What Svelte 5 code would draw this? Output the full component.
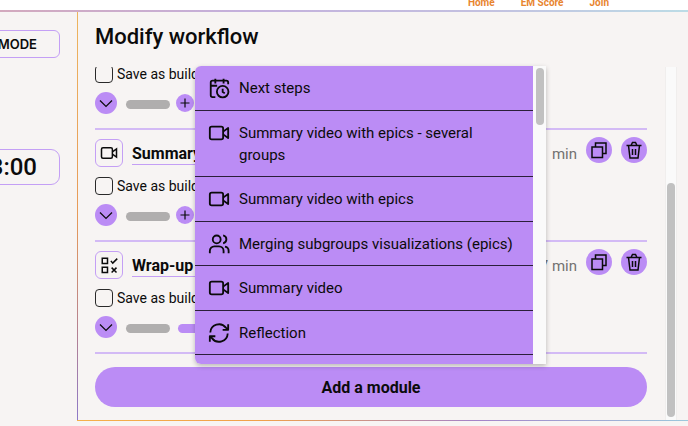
<script>
  const navLinks = ['Home', 'EM Score', 'Join'];

  const modules = [
    { id: 'intro', title: '', icon: '', minutes: 0, canInsert: true },
    { id: 'summary', title: 'Summary', icon: 'video', minutes: 1, canInsert: true },
    { id: 'wrap', title: 'Wrap-up', icon: 'checks', minutes: 7, canInsert: false },
  ];

  const moduleTypes = [
    { label: 'Next steps', icon: 'calendar' },
    { label: 'Summary video with epics - several groups', icon: 'video' },
    { label: 'Summary video with epics', icon: 'video' },
    { label: 'Merging subgroups visualizations (epics)', icon: 'users' },
    { label: 'Summary video', icon: 'video' },
    { label: 'Reflection', icon: 'refresh' },
  ];

  let selected = $state('');
</script>

{#snippet icon(name)}
  <svg class="icon" viewBox="0 0 24 24" aria-hidden="true">
    {#if name === 'video'}
      <rect x="2" y="5" width="14.5" height="14" rx="2" />
      <path d="M16.5 10.5 22 6.5v11l-5.5-4" />
    {:else if name === 'calendar'}
      <path d="M8 2v5M17 2v5M22 8V6a2 2 0 0 0-2-2H5a2 2 0 0 0-2 2v14a2 2 0 0 0 2 2h3M3 9.5h7" />
      <circle cx="16" cy="16" r="6.3" />
      <path d="M16 12.8v3.6l2.3 1.3" />
    {:else if name === 'users'}
      <circle cx="9.5" cy="7" r="4.3" />
      <path d="M2 22v-2.5a5 5 0 0 1 5-5h5a5 5 0 0 1 5 5V22" />
      <path d="M16.5 2.5a4.5 4.5 0 0 1 0 8.8M18.5 14.8a4.8 4.8 0 0 1 4 4.7V22" />
    {:else if name === 'refresh'}
      <path d="M2.5 11.5a9.5 9.5 0 0 1 17-5.3L22 8.5M22 2.5v6h-6" />
      <path d="M21.5 12.5a9.5 9.5 0 0 1-17 5.3L2 15.5M2 21.5v-6h6" />
    {:else if name === 'checks'}
      <path d="M3 3h7v7H3zM3 15h7v7H3z" />
      <path d="m14.5 6.5 2.5 3 6-6M15.5 15.5 22 22M22 15.5 15.5 22" />
    {/if}
  </svg>
{/snippet}

<header class="topbar">
  <nav>
    {#each navLinks as link}
      <a href="#{link}">{link}</a>
    {/each}
  </nav>
</header>

<div class="layout">
  <aside>
    <button class="mode" type="button">MODE</button>
    <div class="clock">3:00</div>
  </aside>

  <main class="panel">
    <h1>Modify workflow</h1>

    <div class="body">
      <div class="content">
        <div class="modules">
          {#each modules as mod (mod.id)}
            <section class="module">
              {#if mod.title}
                <div class="head">
                  <span class="badge">{@render icon(mod.icon)}</span>
                  <h2>{mod.title}</h2>
                  <span class="time">{mod.minutes} min</span>
                  <button class="action" type="button" aria-label="Duplicate">
                    <svg viewBox="0 0 26 26"><path d="M6 10h10.5v10.5H6zM9.5 10V6H20v10.5h-3.5" /></svg>
                  </button>
                  <button class="action" type="button" aria-label="Delete">
                    <svg viewBox="0 0 26 26"><path d="M5.5 8.5h15M10 8.5 11.5 5.5h3L16 8.5M7.5 8.5 9 21h8l1.5-12.5M11.5 12v6M14.5 12v6" /></svg>
                  </button>
                </div>
              {/if}
              <label class="save">
                <input type="checkbox" />
                Save as build
              </label>
              <div class="flow">
                <button class="expand" type="button" aria-label="Expand">
                  <svg viewBox="0 0 22 22"><path d="m5 8.5 6 6 6-6" /></svg>
                </button>
                <span class="bar"></span>
                {#if mod.canInsert}
                  <button class="plus" type="button" aria-label="Insert">
                    <svg viewBox="0 0 18 18"><path d="M9 4.5v9M4.5 9h9" /></svg>
                  </button>
                {:else}
                  <span class="bar active"></span>
                {/if}
              </div>
            </section>
          {/each}
        </div>
        <button class="add" type="button">Add a module</button>
      </div>
      <div class="track"><div class="thumb"></div></div>
    </div>

    <div class="dropdown">
      <ul>
        {#each moduleTypes as type}
          <li>
            <button type="button" onclick={() => (selected = type.label)}>
              {@render icon(type.icon)}
              <span>{type.label}</span>
            </button>
          </li>
        {/each}
      </ul>
      <div class="menu-track"><div class="menu-thumb"></div></div>
    </div>
  </main>
</div>

<style>
  :global(body) {
    background: #f7f4f3;
    color: #0b0b0b;
    font-family: Roboto, "Liberation Sans", sans-serif;
    overflow: hidden;
  }

  button {
    padding: 0;
    border: 0;
    color: inherit;
    font: inherit;
    cursor: pointer;
  }

  svg {
    display: block;
    fill: none;
    stroke: currentColor;
    stroke-width: 1.2;
  }

  .icon {
    flex: none;
    width: 22px;
    height: 22px;
    stroke-width: 2;
    stroke-linejoin: round;
  }

  .topbar {
    height: 10px;
    background: #fff;
    border-bottom: 2px solid;
    border-image: linear-gradient(90deg, #d3a9bd, #c4b0dc 35%, #c3c0e0 70%, #bcdce6) 1;
  }

  nav {
    display: flex;
    align-items: flex-end;
    justify-content: flex-end;
    gap: 26px;
    height: 9px;
    padding-right: 79px;
    overflow: hidden;
  }

  nav a {
    color: #e8852f;
    font-size: 10px;
    font-weight: 700;
    line-height: 12px;
    text-decoration: none;
  }

  .layout {
    display: flex;
  }

  aside {
    display: flex;
    flex: none;
    flex-direction: column;
    align-items: flex-end;
    gap: 91px;
    width: 60px;
    padding: 18px 17px 0 0;
    overflow: hidden;
  }

  .mode,
  .clock {
    box-sizing: border-box;
    width: 120px;
    padding-right: 22px;
    border: 1px solid #c49ff5;
    background: none;
    text-align: right;
  }

  .mode {
    height: 28px;
    border-radius: 6px;
    font-family: Inter, sans-serif;
    font-size: 13px;
    font-weight: 600;
  }

  .clock {
    border-radius: 9px;
    font-size: 24px;
    font-weight: 500;
    line-height: 34px;
  }

  .panel {
    position: relative;
    flex: 1;
    min-width: 0;
    padding-left: 17px;
    border: 1px solid;
    border-width: 0 0 1px 1px;
    border-image: linear-gradient(90deg, #f5b04c, #f0a04a 30%, #a583c8 65%, #9cc8dc) 1;
  }

  .panel::before {
    content: "";
    position: absolute;
    inset: 0 auto 0 -1px;
    width: 1px;
    background: linear-gradient(#edb45e, #e79a58 50%, #b58190 78%, #8d78c8);
  }

  h1 {
    margin: 0;
    padding: 11px 0 16px;
    font-size: 22px;
    font-weight: 500;
    line-height: 28px;
  }

  .body {
    display: flex;
    gap: 18px;
    padding-right: 11px;
  }

  .content {
    flex: 1;
    min-width: 0;
    padding-bottom: 13px;
  }

  .modules {
    display: flex;
    flex-direction: column;
    justify-content: flex-end;
    max-height: 287px;
    overflow: hidden;
  }

  .module {
    flex: none;
    padding: 7px 0 14px;
    border-bottom: 2px solid #d3baf5;
  }

  .head {
    display: flex;
    align-items: flex-end;
    gap: 9px;
    height: 30px;
    margin-bottom: 10px;
  }

  .badge {
    display: grid;
    place-items: center;
    width: 26px;
    height: 26px;
    border: 1px solid #c49ff5;
    border-radius: 6px;
  }

  .badge .icon {
    width: 18px;
    height: 18px;
    stroke-linejoin: miter;
  }

  h2,
  .time {
    margin: 0 0 2px;
    border-bottom: 1px solid transparent;
    font-size: 16px;
    line-height: 20px;
  }

  h2 {
    width: 240px;
    border-color: #c49ff5;
    font-weight: 700;
  }

  .time {
    margin-left: auto;
    color: #737171;
    font-size: 15px;
  }

  .action {
    align-self: flex-start;
    width: 26px;
    height: 26px;
    border-radius: 50%;
    background: #bb8cf5;
  }

  .action svg {
    stroke-width: 1.5;
  }

  .save {
    display: flex;
    align-items: center;
    gap: 4px;
    height: 18px;
    font-size: 14px;
  }

  .save input {
    appearance: none;
    width: 18px;
    height: 18px;
    margin: 0;
    border: 1px solid #2a2a2a;
    border-radius: 4px;
  }

  .flow {
    display: flex;
    align-items: center;
    height: 22px;
    margin-top: 9px;
  }

  .expand {
    width: 22px;
    height: 22px;
    margin-right: 9px;
    border-radius: 50%;
    background: #bb8cf5;
  }

  .bar {
    width: 44px;
    height: 9px;
    margin-top: 3px;
    border-radius: 5px;
    background: #b0aeae;
  }

  .bar.active {
    margin-left: 8px;
    background: #bb8cf5;
  }

  .plus {
    width: 18px;
    height: 18px;
    margin-left: 6px;
    border-radius: 50%;
    background: #bb8cf5;
  }

  .add {
    width: 100%;
    height: 40px;
    margin-top: 13px;
    border-radius: 20px;
    background: #bb8cf5;
    font-size: 16px;
    font-weight: 700;
  }

  .track {
    display: flex;
    flex-direction: column;
    justify-content: flex-end;
    align-items: center;
    box-sizing: border-box;
    width: 12px;
    padding-bottom: 3px;
    border: 1px solid #f0eeed;
    border-width: 0 1px;
    background: #fafafa;
  }

  .thumb {
    width: 8px;
    height: 67%;
    border-radius: 4px;
    background: #c1c1c1;
  }

  .dropdown {
    position: absolute;
    top: 54px;
    left: 117px;
    display: flex;
    width: 351px;
    border-radius: 6px 0 0 6px;
    overflow: hidden;
    background: #fafafa;
    box-shadow: 0 2px 5px rgba(0, 0, 0, 0.25);
  }

  ul {
    display: grid;
    flex: 1;
    min-height: 289px;
    margin: 0;
    padding: 0 0 9px;
    background: #bb8cf5;
    list-style: none;
  }

  li {
    display: flex;
    border-bottom: 1px solid #2b1f3a;
  }

  li button {
    display: flex;
    flex: 1;
    align-items: flex-start;
    gap: 9px;
    padding: 11px 14px 10px 13px;
    background: none;
    font-size: 15px;
    line-height: 22px;
    text-align: left;
  }

  .menu-track {
    width: 9px;
    padding: 2px 2px 0;
  }

  .menu-thumb {
    width: 8px;
    height: 57px;
    margin: 0 auto;
    border-radius: 4px;
    background: #c1c1c1;
  }
</style>
